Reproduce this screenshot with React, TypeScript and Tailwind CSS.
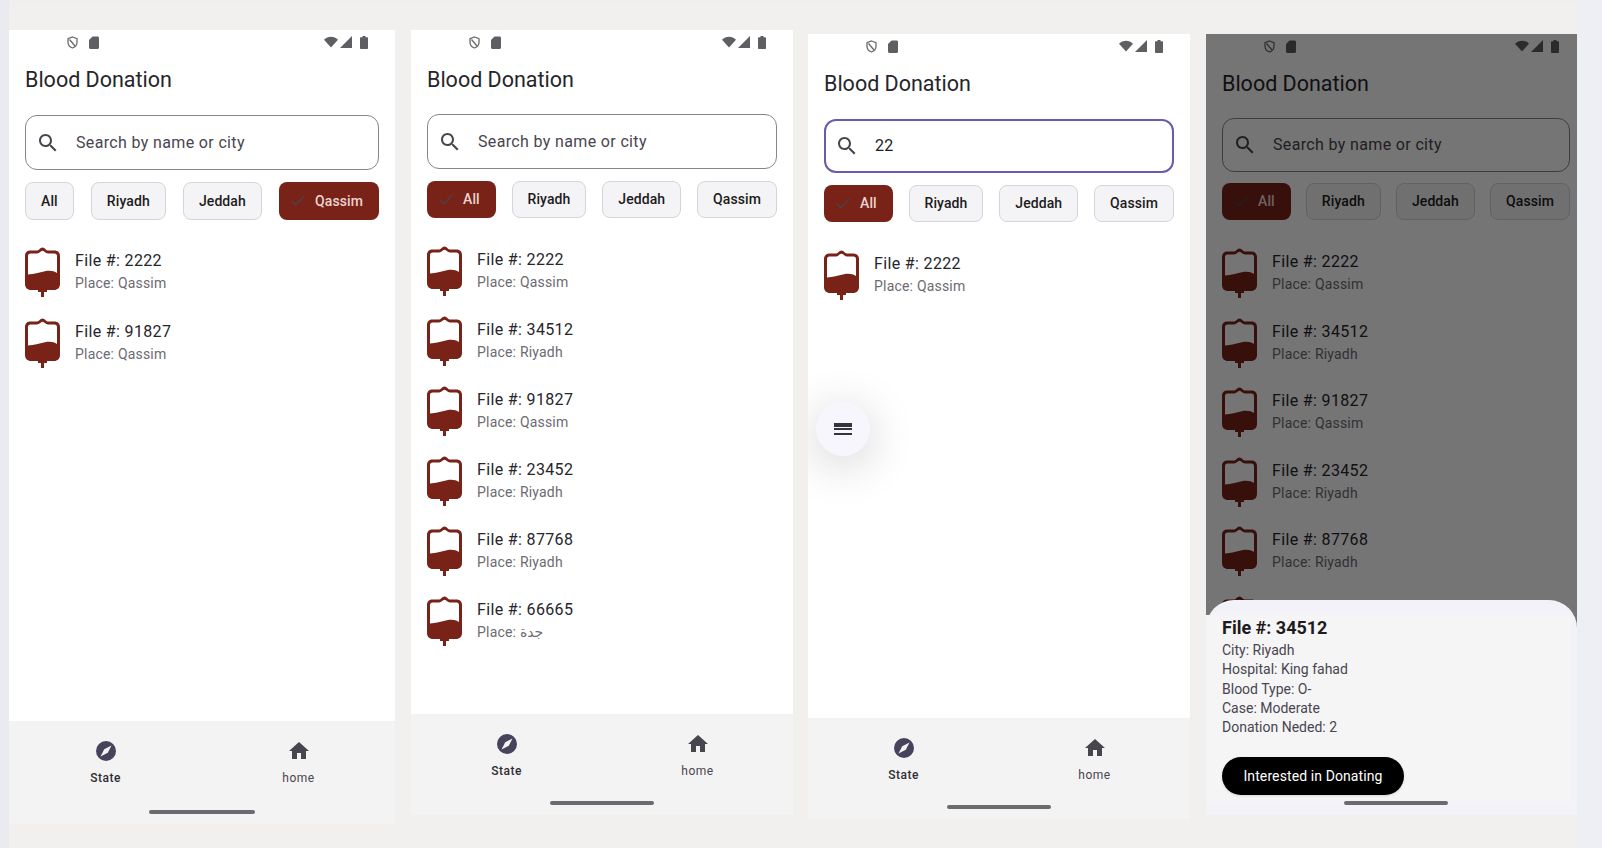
import { Check } from "lucide-react";

type Donor = { file: string; place: string };

const allDonors: Donor[] = [
  { file: "2222", place: "Qassim" },
  { file: "34512", place: "Riyadh" },
  { file: "91827", place: "Qassim" },
  { file: "23452", place: "Riyadh" },
  { file: "87768", place: "Riyadh" },
  { file: "66665", place: "جدة" },
];

const cities = ["All", "Riyadh", "Jeddah", "Qassim"];

function BloodBag() {
  return (
    <svg width="35" height="50" viewBox="0 0 35 50" className="shrink-0" fill="#782218">
      <path
        fillRule="evenodd"
        d="M5 3.5H12.5C14 3.5 15 0.5 17.5 0.5C20 0.5 21 3.5 22.5 3.5H29.5C32.8 3.5 35 5.7 35 9V37C35 40.8 32.5 43 29 43H6C2.5 43 0 40.8 0 37V9C0 5.7 2.2 3.5 5 3.5ZM5.5 6.5C4 6.5 3 7.6 3 9V27.6C9 27 14 25.4 20 24.2C25 23.3 29 24 32 26V9C32 7.6 31 6.5 29.5 6.5H23C20.5 6.5 19.5 3.7 17.5 3.7C15.5 3.7 14.5 6.5 12 6.5Z"
      />
      <rect x="13" y="42" width="9" height="3" />
      <rect x="16" y="43" width="3" height="7" />
    </svg>
  );
}

function StatusBar({ rightPad }: { rightPad: string }) {
  return (
    <div className={`flex h-[24px] items-center justify-between pl-[58px] ${rightPad}`}>
      <div className="flex items-center gap-[11px]">
        <svg width="11" height="13" viewBox="0 0 11 13" fill="none" stroke="#6a6a6e" strokeWidth="1.3">
          <path d="M5.5 1L10 2.6V6.2C10 9 8.2 11 5.5 12C2.8 11 1 9 1 6.2V2.6Z" />
          <path d="M2.5 3.5L8 10" />
        </svg>
        <svg width="10" height="13" viewBox="0 0 10 13" fill="#5f5f63">
          <path d="M3.5 0.5H8.5C9.3 0.5 10 1.2 10 2V11.5C10 12.3 9.3 13 8.5 13H1.5C0.7 13 0 12.3 0 11.5V4Z" />
        </svg>
      </div>
      <div className="flex items-center gap-[2px]">
        <svg width="14" height="12" viewBox="0 0 15 12" fill="#5f5f63">
          <path d="M0 3.5C4 -0.8 11 -0.8 15 3.5L7.5 12Z" />
        </svg>
        <svg width="12" height="12" viewBox="0 0 12 12" fill="#5f5f63" className="mr-[6px]">
          <path d="M12 0V12H0Z" />
        </svg>
        <svg width="8" height="13" viewBox="0 0 8 13" fill="#5f5f63">
          <path d="M2.5 0H5.5V1.2H7C7.6 1.2 8 1.6 8 2.2V12C8 12.6 7.6 13 7 13H1C0.4 13 0 12.6 0 12V2.2C0 1.6 0.4 1.2 1 1.2H2.5Z" />
        </svg>
      </div>
    </div>
  );
}

function SearchBox({ className, value, focused }: { className: string; value?: string; focused?: boolean }) {
  return (
    <div
      className={`flex shrink-0 items-center rounded-[12px] ${className} ${
        focused ? "border-2 border-[#6b5bb0] pl-[9px]" : "border border-[#86858c] pl-[10px]"
      }`}
    >
      <svg width="24" height="24" viewBox="0 0 24 24" fill="#49454f" className="shrink-0">
        <path d="M15.5 14h-.79l-.28-.27C15.41 12.59 16 11.11 16 9.5 16 5.91 13.09 3 9.5 3S3 5.91 3 9.5 5.91 16 9.5 16c1.61 0 3.09-.59 4.23-1.57l.27.28v.79l5 4.99L20.49 19l-4.99-5zm-6 0C7.01 14 5 11.99 5 9.5S7.01 5 9.5 5 14 7.01 14 9.5 11.99 14 9.5 14z" />
      </svg>
      <span
        className={`ml-[16px] text-[16px] tracking-[0.35px] ${value ? "text-[#1d1b20]" : "text-[#49454f]"}`}
      >
        {value ?? "Search by name or city"}
      </span>
    </div>
  );
}

function Chips({ className, active }: { className: string; active: string }) {
  return (
    <div className={`flex shrink-0 justify-between ${className}`}>
      {cities.map((city) =>
        city === active ? (
          <div
            key={city}
            className="flex items-center gap-[8px] rounded-[8px] bg-[#782218] pl-[10px] pr-[16px] text-[14px] font-medium tracking-[0.1px] text-[#ecd5d1]"
          >
            <Check size={18} strokeWidth={1.5} className="text-[#49454f]" />
            {city}
          </div>
        ) : (
          <div
            key={city}
            className="flex items-center rounded-[8px] border border-[#d4d4dc] bg-[#f4f4f6] px-[15px] text-[14px] font-medium tracking-[0.1px] text-[#1d1b20]"
          >
            {city}
          </div>
        )
      )}
    </div>
  );
}

function DonorRow({ donor, rowGap }: { donor: Donor; rowGap: string }) {
  return (
    <div className={`flex h-[50px] gap-[15px] ${rowGap}`}>
      <BloodBag />
      <div className="pt-[2px]">
        <div className="text-[16px] leading-[24px] tracking-[0.35px] text-[#26252a]">File #: {donor.file}</div>
        <div className="text-[14px] leading-[20px] tracking-[0.2px] text-[#6d6a72]">Place: {donor.place}</div>
      </div>
    </div>
  );
}

function BottomNav({ height, bar }: { height: string; bar: string }) {
  return (
    <div className={`flex shrink-0 flex-col items-center bg-[#f3f3f4] ${height}`}>
      <div className="flex w-full pt-[18px]">
        <div className="flex flex-1 flex-col items-center">
          <svg width="24" height="24" viewBox="0 0 24 24" fill="#47435a">
            <circle cx="12" cy="12" r="10" />
            <path fill="#f3f3f4" d="M17.5 6.5L13.8 13.8L6.5 17.5L10.2 10.2Z" />
          </svg>
          <span className="mt-[6px] text-[12px] font-medium leading-[18px] tracking-[0.5px] text-[#2f2d33]">State</span>
        </div>
        <div className="flex flex-1 flex-col items-center">
          <svg width="24" height="24" viewBox="0 0 24 24" fill="#47454e">
            <path d="M10 20v-6h4v6h5v-8h3L12 3 2 12h3v8z" />
          </svg>
          <span className="mt-[6px] text-[12px] leading-[18px] tracking-[0.5px] text-[#49454f]">home</span>
        </div>
      </div>
      <div className={`h-[4px] rounded-full bg-[#6b6b6f] ${bar}`} />
    </div>
  );
}

function Phone({
  className,
  rightPad,
  statusPad,
  searchBox,
  chips,
  list,
  rowGap,
  search,
  focused,
  active,
  donors,
  peek,
  nav,
  children,
}: {
  className: string;
  rightPad: string;
  statusPad: string;
  searchBox: string;
  chips: string;
  list: string;
  rowGap: string;
  search?: string;
  focused?: boolean;
  active: string;
  donors: Donor[];
  peek?: boolean;
  nav?: { height: string; bar: string };
  children?: React.ReactNode;
}) {
  return (
    <div className={`relative flex shrink-0 flex-col overflow-hidden bg-white ${className}`}>
      <StatusBar rightPad={statusPad} />
      <div className={`flex min-h-0 flex-1 flex-col overflow-hidden pl-[16px] ${rightPad}`}>
        <div className="mt-[6px] h-[40px] shrink-0 text-[21.5px] leading-[40px] text-[#26252a]">Blood Donation</div>
        <SearchBox className={searchBox} value={search} focused={focused} />
        <Chips className={chips} active={active} />
        <div className={list}>
          {donors.map((d) => (
            <DonorRow key={d.file} donor={d} rowGap={rowGap} />
          ))}
          {/* sixth bag shows just above the sheet */}
          {peek && <BloodBag />}
        </div>
      </div>
      {nav && <BottomNav height={nav.height} bar={nav.bar} />}
      {children}
    </div>
  );
}

function DetailSheet() {
  const lines = ["City: Riyadh", "Hospital: King fahad", "Blood Type: O-", "Case: Moderate", "Donation Neded: 2"];
  return (
    <>
      <div className="absolute inset-0 bg-black/[0.54]" />
      <div className="absolute inset-x-0 bottom-0 h-[215px] rounded-t-[28px] bg-[#f3f2f8] pr-[6px] pt-[15px]">
        <div className="h-[186px] bg-[#f5f5f6] pl-[16px]">
          <div className="text-[18px] font-bold leading-[26px] text-[#1d1b20]">File #: 34512</div>
          <div className="text-[14px] leading-[19.3px] text-[#49454f]">
            {lines.map((l) => (
              <div key={l}>{l}</div>
            ))}
          </div>
          <div className="mt-[20px] flex h-[38px] w-[182px] items-center justify-center rounded-full bg-black text-[14px] tracking-[0.1px] text-white shadow-sm">
            Interested in Donating
          </div>
        </div>
        <div className="absolute left-[138px] top-[201px] h-[4px] w-[104px] rounded-full bg-[#6b6b6f]" />
      </div>
    </>
  );
}

export default function App() {
  return (
    <div className="flex h-[848px] w-[1602px] overflow-hidden bg-[#f1f0ee] font-['Roboto','DejaVu_Sans',sans-serif]">
      <div className="w-[9px] shrink-0 bg-[#e9ebf1]" />
      <div className="flex flex-1 items-start border-t border-[#eceef2]">
        <Phone
          className="mt-[29px] h-[794px] w-[386px]"
          rightPad="pr-[16px]"
          statusPad="pr-[27px]"
          searchBox="mt-[15px] h-[55px]"
          chips="mt-[12px] h-[38px]"
          list="mt-[27px]"
          rowGap="mb-[21px]"
          active="Qassim"
          donors={allDonors.filter((d) => d.file === "2222" || d.file === "91827")}
          nav={{ height: "h-[103px]", bar: "mt-[23px] w-[106px]" }}
        />
        <Phone
          className="ml-[16px] mt-[29px] h-[785px] w-[382px]"
          rightPad="pr-[16px]"
          statusPad="pr-[27px]"
          searchBox="mt-[14px] h-[55px]"
          chips="mt-[12px] h-[37px]"
          list="mt-[28px]"
          rowGap="mb-[20px]"
          active="All"
          donors={allDonors}
          nav={{ height: "h-[101px]", bar: "mt-[21px] w-[104px]" }}
        />
        <Phone
          className="ml-[15px] mt-[33px] h-[785px] w-[382px]"
          rightPad="pr-[16px]"
          statusPad="pr-[27px]"
          searchBox="mt-[15px] h-[54px]"
          chips="mt-[12px] h-[37px]"
          list="mt-[28px]"
          rowGap="mb-[20px]"
          search="22"
          focused
          active="All"
          donors={allDonors.slice(0, 1)}
          nav={{ height: "h-[101px]", bar: "mt-[21px] w-[104px]" }}
        >
          <div className="absolute left-[8px] top-[368px] flex h-[54px] w-[54px] items-center justify-center rounded-full bg-[#f8f6fd] shadow-[0_8px_48px_rgba(0,0,0,0.2)]">
            <svg width="24" height="24" viewBox="0 0 24 24" fill="#35333b">
              <path d="M3 18h18v-2H3v2zm0-5h18v-2H3v2zm0-5v2h18V6H3z" />
            </svg>
          </div>
        </Phone>
        <Phone
          className="ml-[16px] mt-[33px] h-[781px] w-[371px]"
          rightPad="pr-[7px]"
          statusPad="pr-[18px]"
          searchBox="mt-[14px] h-[54px]"
          chips="mt-[11px] h-[37px]"
          list="mt-[28px]"
          rowGap="mb-[19.6px]"
          active="All"
          donors={allDonors.slice(0, 5)}
          peek
        >
          <DetailSheet />
        </Phone>
      </div>
      <div className="w-[25px] shrink-0 bg-[#edeff4]" />
    </div>
  );
}
